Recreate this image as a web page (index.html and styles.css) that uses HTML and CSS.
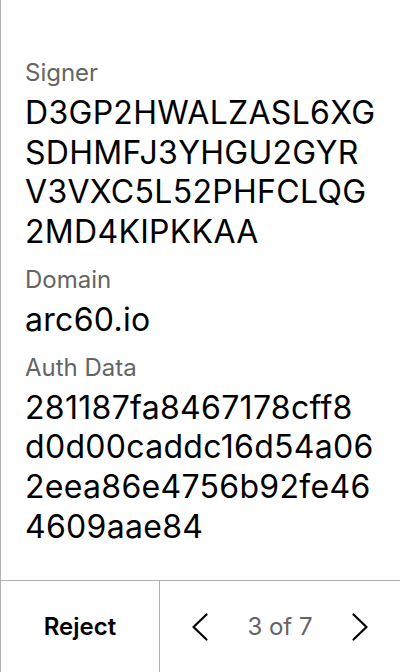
FILE: index.html
```html
<!DOCTYPE html>
<html>
<head>
<meta charset="utf-8">
<link rel="stylesheet" href="styles.css">
</head>
<body>
<div class="screen">
  <main class="content">
    <section class="field">
      <div class="label">Signer</div>
      <div class="value">D3GP2HWALZASL6XG<wbr>SDHMFJ3YHGU2GYR<wbr>V3VXC5L52PHFCLQG<wbr>2MD4KIPKKAA</div>
    </section>
    <section class="field">
      <div class="label">Domain</div>
      <div class="value">arc60.io</div>
    </section>
    <section class="field">
      <div class="label">Auth Data</div>
      <div class="value">281187fa8467178cff8<wbr>d0d00caddc16d54a06<wbr>2eea86e4756b92fe46<wbr>4609aae84</div>
    </section>
  </main>
  <footer class="footer">
    <button class="reject">Reject</button>
    <div class="pager">
      <button class="nav" aria-label="Previous">
        <svg width="16" height="28" viewBox="0 0 16 28"><path d="M14.5 1.5 L1.5 14 L14.5 26.5" fill="none" stroke="#000" stroke-width="2.2" stroke-linecap="round" stroke-linejoin="round"/></svg>
      </button>
      <span class="count">3 of 7</span>
      <button class="nav" aria-label="Next">
        <svg width="16" height="28" viewBox="0 0 16 28"><path d="M1.5 1.5 L14.5 14 L1.5 26.5" fill="none" stroke="#000" stroke-width="2.2" stroke-linecap="round" stroke-linejoin="round"/></svg>
      </button>
    </div>
  </footer>
</div>
</body>
</html>
```
FILE: styles.css
```css
* { box-sizing: border-box; }
html, body { margin: 0; padding: 0; background: #fff; }
body { font-family: Inter, "Noto Sans", sans-serif; color: #000; }
.screen {
  width: 400px;
  height: 672px;
  display: flex;
  flex-direction: column;
  border-left: 1px solid #b3b3b3;
}
.content {
  flex: 1;
  padding: 58px 22px 0 24px;
  display: flex;
  flex-direction: column;
  gap: 13px;
}
.field { display: flex; flex-direction: column; gap: 6px; }
.label { font-size: 24px; line-height: 29px; color: #646464; }
.value {
  font-size: 32px;
  line-height: 39.7px;
  letter-spacing: 0.3px;
  overflow-wrap: anywhere;
}
.footer {
  height: 92px;
  border-top: 1px solid #b3b3b3;
  display: flex;
}
button { font-family: inherit; background: none; border: 0; padding: 0; cursor: pointer; color: inherit; }
.reject {
  width: 159px;
  font-size: 24px;
  font-weight: 600;
  border-right: 1px solid #b3b3b3;
}
.pager {
  flex: 1;
  display: flex;
  align-items: center;
  justify-content: space-between;
  padding: 0 32px 0 32px;
}
.nav { width: 16px; height: 28px; display: flex; }
.count { font-size: 24px; color: #646464; }
```
